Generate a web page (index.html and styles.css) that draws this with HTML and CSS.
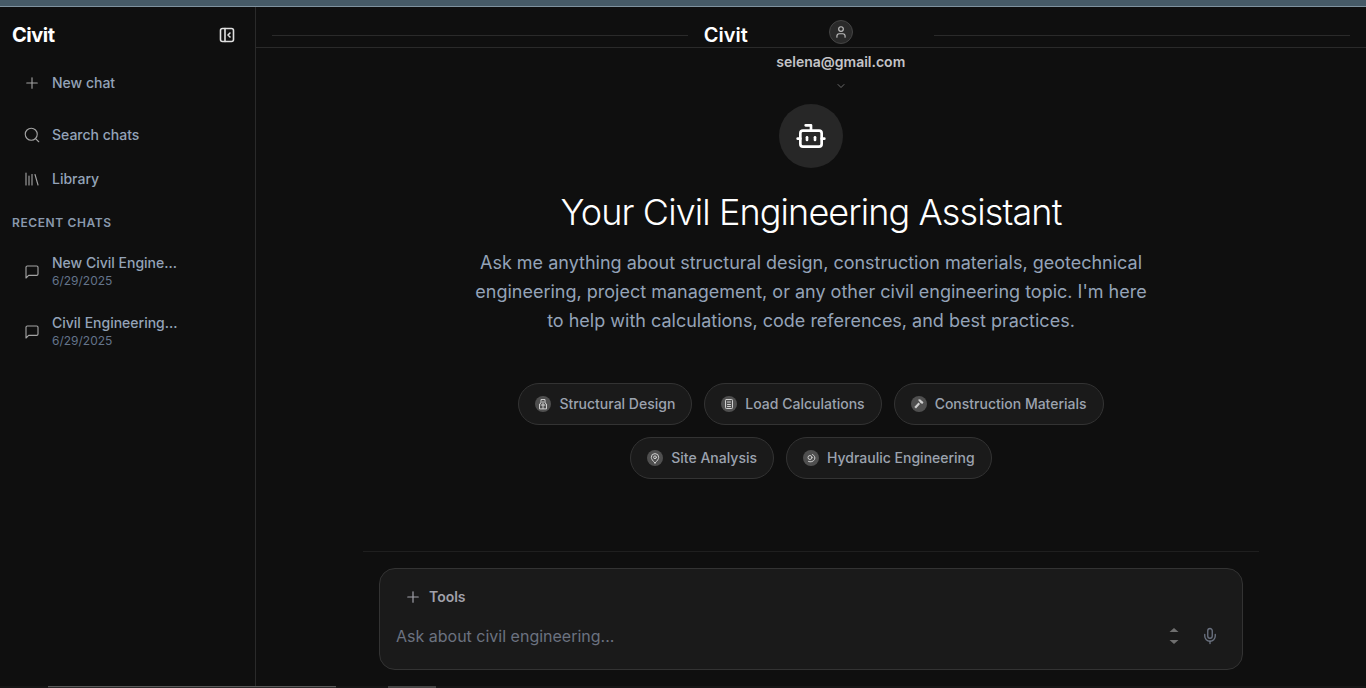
FILE: index.html
```html
<!DOCTYPE html>
<html>
<head>
    <meta charset='UTF-8'>
    <meta name='viewport' content='width=device-width, initial-scale=1.0'>
    <title>Civit</title>
    <link rel="stylesheet" href="styles.css">
</head>
<body>
    <div class='top-strip'></div>

    <div class='app'>
        <aside class='sidebar'>
            <div class='side-head'>
                <span class='logo'>Civit</span>
                <svg class='collapse' viewBox='0 0 16 16'><rect x='1.5' y='1.5' width='13' height='13' rx='2'/><path d='M6 1.5v13'/><path d='M11 6l-2 2 2 2'/></svg>
            </div>

            <a class='nav-item new-chat'>
                <svg class='icon' viewBox='0 0 24 24'><path d='M5 12h14'/><path d='M12 5v14'/></svg>
                New chat
            </a>
            <a class='nav-item'>
                <svg class='icon' viewBox='0 0 24 24'><circle cx='11' cy='11' r='8'/><path d='m21 21-4.3-4.3'/></svg>
                Search chats
            </a>
            <a class='nav-item'>
                <svg class='icon' viewBox='0 0 24 24'><path d='m16 6 4 14'/><path d='M12 6v14'/><path d='M8 8v12'/><path d='M4 4v16'/></svg>
                Library
            </a>

            <div class='recent-title'>RECENT CHATS</div>

            <a class='chat-item'>
                <svg class='icon' viewBox='0 0 24 24'><path d='M21 15a2 2 0 0 1-2 2H7l-4 4V5a2 2 0 0 1 2-2h14a2 2 0 0 1 2 2z'/></svg>
                <div>
                    <div class='chat-name'>New Civil Engine...</div>
                    <div class='chat-date'>6/29/2025</div>
                </div>
            </a>
            <a class='chat-item'>
                <svg class='icon' viewBox='0 0 24 24'><path d='M21 15a2 2 0 0 1-2 2H7l-4 4V5a2 2 0 0 1 2-2h14a2 2 0 0 1 2 2z'/></svg>
                <div>
                    <div class='chat-name'>Civil Engineering...</div>
                    <div class='chat-date'>6/29/2025</div>
                </div>
            </a>
        </aside>

        <main class='main'>
            <header class='header'>
                <span class='header-line'></span>
                <span class='header-brand'>Civit</span>
                <div class='user'>
                    <span class='avatar'>
                        <svg viewBox='0 0 24 24'><path d='M19 21v-2a4 4 0 0 0-4-4H9a4 4 0 0 0-4 4v2'/><circle cx='12' cy='7' r='4'/></svg>
                    </span>
                    <span class='user-mail'>selena@gmail.com</span>
                    <svg class='user-chevron' viewBox='0 0 24 24'><path d='m6 9 6 6 6-6'/></svg>
                </div>
                <span class='header-line'></span>
            </header>

            <section class='welcome'>
                <div class='bot-circle'>
                    <svg viewBox='0 0 24 24'><path d='M12 8V4H8'/><rect x='4' y='8' width='16' height='12' rx='2'/><path d='M2 14h2'/><path d='M20 14h2'/><path d='M15 13v2'/><path d='M9 13v2'/></svg>
                </div>
                <h1>Your Civil Engineering Assistant</h1>
                <p>Ask me anything about structural design, construction materials, geotechnical engineering, project management, or any other civil engineering topic. I'm here to help with calculations, code references, and best practices.</p>

                <div class='chips'>
                    <button class='chip'>
                        <span class='chip-icon'><svg viewBox='0 0 16 16'><path d='M4.500 12.500V8L6 7V3.500h4V7l1.500 1v4.500z'/><path d='M8 5.500v7M6 9h4'/></svg></span>
                        Structural Design
                    </button>
                    <button class='chip'>
                        <span class='chip-icon'><svg viewBox='0 0 16 16'><rect x='4.500' y='3.500' width='7' height='9' rx='.8'/><path d='M6.500 6h3M6.500 8.500h3M6.500 10.500h3'/></svg></span>
                        Load Calculations
                    </button>
                    <button class='chip'>
                        <span class='chip-icon'><svg class='solid' viewBox='0 0 16 16'><path d='M7 3.800l2-.6 3.500 3-1.200 1.800-1.800-1z'/><path d='M7.500 6.500l1.500 1.500-4 4.500-1.700-1.600z'/></svg></span>
                        Construction Materials
                    </button>
                    <button class='chip'>
                        <span class='chip-icon'><svg viewBox='0 0 16 16'><path d='M8 13c-2.300-2.300-3.700-4-3.700-5.700a3.700 3.700 0 0 1 7.400 0c0 1.700-1.400 3.400-3.700 5.700z'/><circle cx='8' cy='7.300' r='1.400'/></svg></span>
                        Site Analysis
                    </button>
                    <button class='chip'>
                        <span class='chip-icon'><svg viewBox='0 0 16 16'><circle cx='7' cy='7.500' r='2'/><path d='M9.500 4.500c2 1 3 3 2 5s-4 3-6 2'/></svg></span>
                        Hydraulic Engineering
                    </button>
                </div>
            </section>

            <section class='composer-wrap'>
                <div class='composer'>
                    <div class='tools'>
                        <svg viewBox='0 0 24 24'><path d='M5 12h14'/><path d='M12 5v14'/></svg>
                        Tools
                    </div>
                    <div class='composer-row'>
                        <span class='placeholder'>Ask about civil engineering...</span>
                        <svg class='carets' viewBox='0 0 10 18'><path d='M5 1l4.500 4H.5z'/><path d='M5 17l4.500-4H.5z'/></svg>
                        <svg class='mic' viewBox='0 0 24 24'><path d='M12 2a3 3 0 0 0-3 3v7a3 3 0 0 0 6 0V5a3 3 0 0 0-3-3z'/><path d='M19 10v2a7 7 0 0 1-14 0v-2'/><path d='M12 19v3'/></svg>
                    </div>
                </div>
            </section>
        </main>
    </div>

    <div class='bottom-strip'>
        <span class='scroll-a'></span>
        <span class='scroll-b'></span>
    </div>
</body>
</html>
```

FILE: styles.css
```css
html, body {
    margin: 0;
    padding: 0;
    height: 688px;
    overflow: hidden;
    background: #0f0f0f;
    font-family: 'Inter', 'Liberation Sans', sans-serif;
    color: #94a3b8;
}

svg {
    fill: none;
    stroke: currentColor;
    stroke-width: 2;
    stroke-linecap: round;
    stroke-linejoin: round;
    flex-shrink: 0;
}

.top-strip {
    height: 6px;
    background: #465a67;
    border-bottom: 1px solid #7f929f;
}

.app {
    display: flex;
    height: 679px;
}

/* Sidebar */
.sidebar {
    box-sizing: border-box;
    width: 256px;
    flex-shrink: 0;
    border-right: 1px solid #2a2a2a;
    padding: 16px 12px 0;
}

.side-head {
    display: flex;
    align-items: center;
    justify-content: space-between;
    height: 24px;
    padding-right: 8px;
    margin-bottom: 14px;
}

.logo {
    font-size: 20px;
    font-weight: 700;
    letter-spacing: -0.5px;
    color: #fff;
}

.collapse {
    width: 16px;
    height: 16px;
    stroke-width: 1.6;
    color: #e0e0e0;
}

.nav-item {
    display: flex;
    align-items: center;
    gap: 11px;
    height: 44px;
    padding-left: 11px;
    font-size: 14px;
    line-height: 20px;
    font-weight: 500;
}

.new-chat {
    margin-bottom: 8px;
}

.icon {
    width: 18px;
    height: 18px;
    stroke-width: 1.5;
    color: #a3a3a3;
}

.recent-title {
    margin-top: 14px;
    font-size: 12px;
    font-weight: 600;
    letter-spacing: 0.6px;
    line-height: 16px;
    color: #8a99ad;
    margin-bottom: 10px;
}

.chat-item {
    display: flex;
    align-items: center;
    gap: 12px;
    height: 60px;
    padding-left: 12px;
}

.chat-item .icon {
    width: 16px;
    height: 16px;
    margin-top: 2px;
    stroke-width: 1.7;
}

.chat-name {
    font-size: 14px;
    font-weight: 500;
    line-height: 20px;
}

.chat-date {
    font-size: 12px;
    line-height: 16px;
    color: #64748b;
}

/* Main */
.main {
    flex: 1;
    min-width: 0;
}

.header {
    box-sizing: border-box;
    display: flex;
    align-items: flex-start;
    height: 41px;
    padding: 0 16px;
    border-bottom: 1px solid #2a2a2a;
}

.header-line {
    flex: 1;
    height: 1px;
    margin-top: 28px;
    background: #2a2a2a;
}

.header-brand {
    margin: 16px 28.5px 0 16px;
    font-size: 20px;
    line-height: 25px;
    font-weight: 600;
    color: #fff;
}

.user {
    display: flex;
    flex-direction: column;
    align-items: center;
    margin: 13px 29px 0 0;
}

.avatar {
    box-sizing: border-box;
    display: flex;
    align-items: center;
    justify-content: center;
    width: 24px;
    height: 24px;
    border-radius: 50%;
    background: #2a2a2a;
    border: 1px solid #444;
    color: #bdbdbd;
}

.avatar svg {
    width: 14px;
    height: 14px;
}

.user-mail {
    margin-top: 8px;
    font-size: 14px;
    line-height: 20px;
    font-weight: 600;
    color: #c4c4c8;
}

.user-chevron {
    width: 12px;
    height: 12px;
    margin-top: 8px;
    color: #8a8a8a;
    stroke-width: 1.5;
}

.welcome {
    display: flex;
    flex-direction: column;
    align-items: center;
    padding-top: 56px;
    height: 487px;
    box-sizing: border-box;
}

.bot-circle {
    display: flex;
    align-items: center;
    justify-content: center;
    width: 64px;
    height: 64px;
    border-radius: 50%;
    background: #272727;
    color: #fff;
}

.bot-circle svg {
    width: 32px;
    height: 32px;
}

h1 {
    margin: 22px 0 0;
    font-size: 36px;
    line-height: 44px;
    font-weight: 300;
    letter-spacing: -0.9px;
    color: #fff;
}

.welcome p {
    width: 672px;
    margin: 14px 0 0;
    text-align: center;
    font-size: 18px;
    line-height: 29px;
}

.chips {
    display: flex;
    flex-wrap: wrap;
    justify-content: center;
    gap: 12px;
    width: 672px;
    margin-top: 48px;
}

.chip {
    display: flex;
    align-items: center;
    gap: 8px;
    height: 42px;
    padding: 0 16px;
    border: 1px solid #333;
    border-radius: 21px;
    background: #1a1a1a;
    color: #9ca3af;
    font-family: inherit;
    font-size: 14px;
    line-height: 20px;
    font-weight: 500;
}

.chip-icon {
    display: flex;
    align-items: center;
    justify-content: center;
    width: 16px;
    height: 16px;
    border-radius: 50%;
    background: #4f4f4f;
    color: #cfcfcf;
}

.chip-icon svg {
    width: 16px;
    height: 16px;
    stroke-width: 1;
}

.chip-icon svg.solid {
    fill: currentColor;
    stroke: none;
}

.composer-wrap {
    box-sizing: border-box;
    width: 896px;
    margin: 16px auto 0;
    padding: 16px 16px 0;
    border-top: 1px solid #1f1f1f;
}

.composer {
    box-sizing: border-box;
    height: 102px;
    border: 1px solid #333;
    border-radius: 16px;
    background: #1a1a1a;
}

.tools {
    display: flex;
    align-items: center;
    gap: 7px;
    height: 20px;
    padding: 18px 0 0 24px;
    font-size: 14px;
    line-height: 20px;
    font-weight: 600;
    color: #a1a1aa;
}

.tools svg {
    width: 18px;
    height: 18px;
    stroke-width: 1.6;
}

.composer-row {
    display: flex;
    align-items: center;
    margin-top: 17px;
    height: 24px;
    padding: 0 23px 0 16px;
}

.placeholder {
    flex: 1;
    font-size: 16px;
    color: #6b7280;
}

.carets {
    width: 10px;
    height: 18px;
    margin-right: 22px;
    fill: #6f6f6f;
    stroke: none;
}

.mic {
    width: 18px;
    height: 18px;
    color: #6b7280;
    stroke-width: 1.8;
}

.bottom-strip {
    display: flex;
    height: 2px;
    padding-left: 48px;
    background: #161616;
}

.scroll-a {
    box-sizing: border-box;
    width: 288px;
    background: #2a2a2a;
    border-top: 1px solid #5a5a5a;
}

.scroll-b {
    width: 48px;
    margin-left: 52px;
    background: #444;
}
```
